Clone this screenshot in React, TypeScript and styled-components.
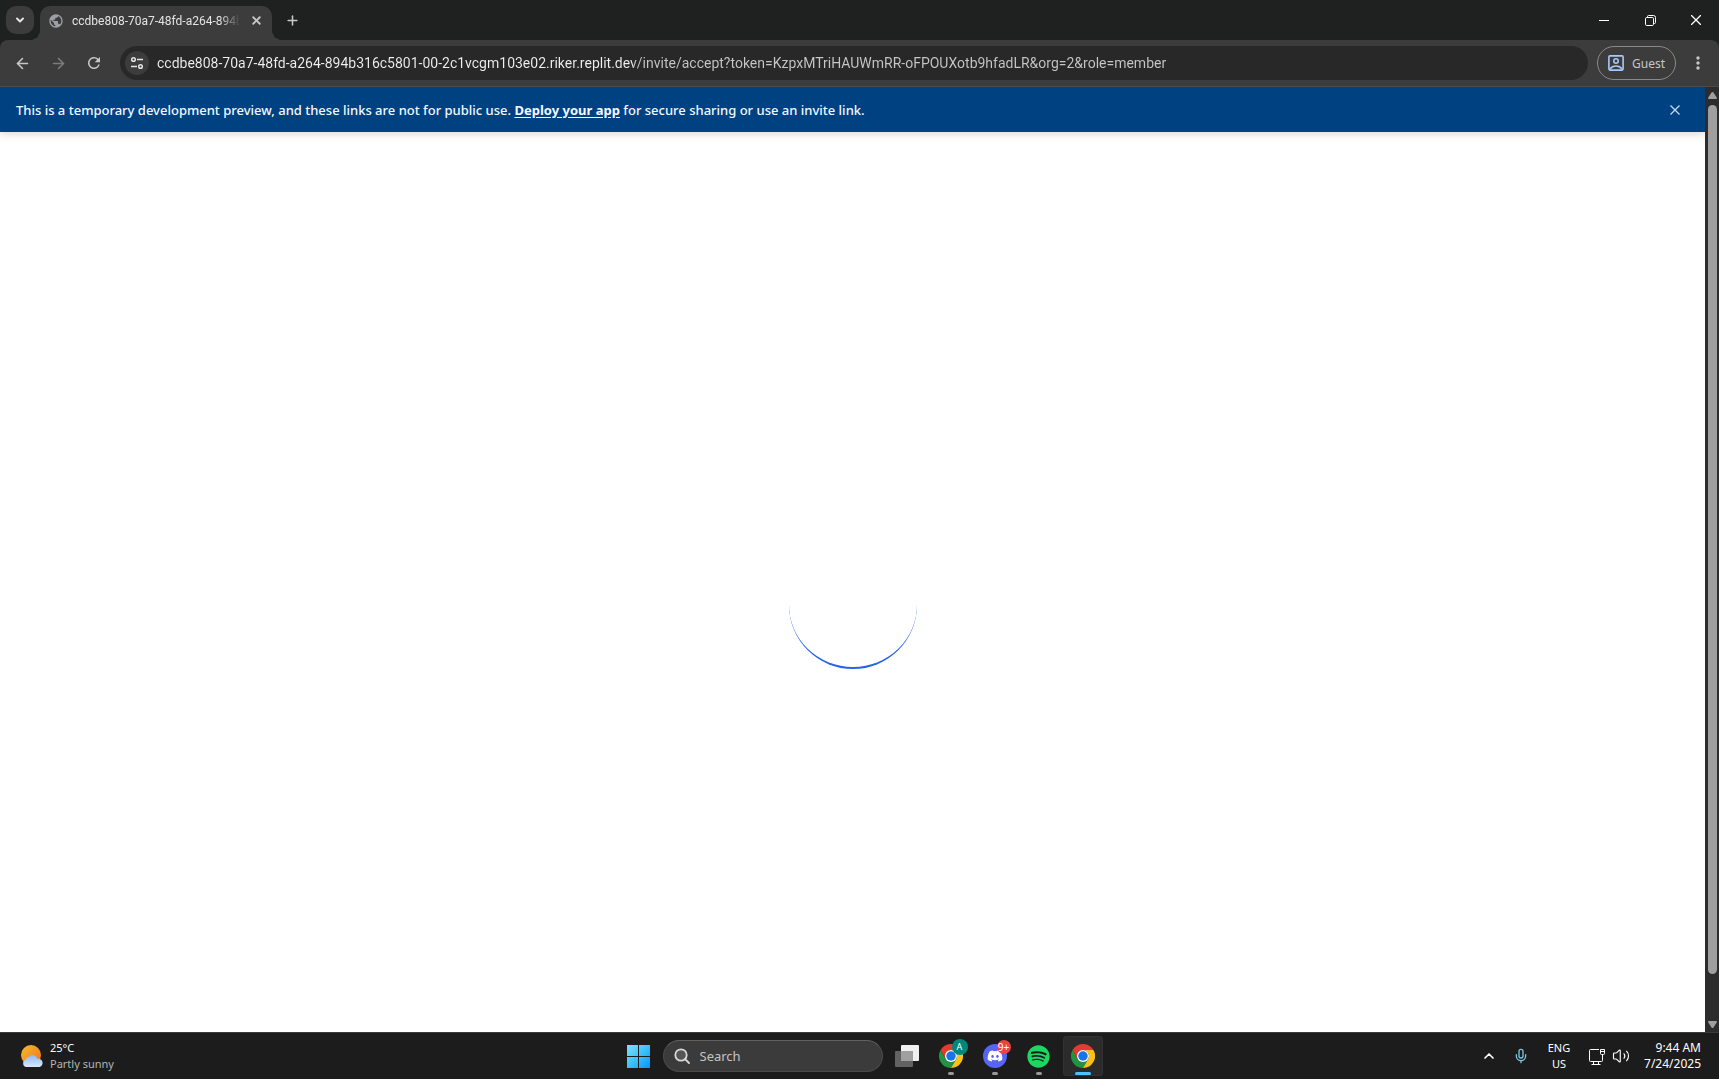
import React from "react";
import styled, { createGlobalStyle } from "styled-components";
import { ArrowLeft, ArrowRight, ChevronDown, ChevronUp, Mic, Plus, Volume2, X } from "lucide-react";
import { MdPublic, MdRefresh, MdMoreVert } from "react-icons/md";
import { FaSpotify, FaDiscord } from "react-icons/fa";

const GlobalStyle = createGlobalStyle`
  *, *::before, *::after { box-sizing: border-box; }
  html, body, #root { height: 100%; }
  body { margin: 0; overflow: hidden; font-family: "Noto Sans", "Open Sans", sans-serif; font-size: 13px; }
  button, input { font: inherit; color: inherit; border: 0; padding: 0; margin: 0; background: none; }
  svg { display: block; flex: none; }
`;

const Desktop = styled.div`
  display: flex;
  flex-direction: column;
  height: 100vh;
  background: #1f2120;
`;

const TabStrip = styled.header`
  display: flex;
  flex: none;
  height: 40px;
  padding-left: 6px;
  color: #e3e3e3;
`;

const TabSearch = styled.button`
  display: grid;
  place-items: center;
  width: 28px;
  height: 28px;
  margin: 6px 6px 0 0;
  border-radius: 10px;
  background: #3c3c3c;
`;

const Tab = styled.div`
  position: relative;
  display: flex;
  align-items: center;
  width: 232px;
  height: 34px;
  margin-top: 6px;
  padding: 0 8px 5px;
  border-radius: 10px 10px 0 0;
  background: #3c3c3c;
  font-family: Roboto, "Noto Sans", sans-serif;
  font-size: 12px;
  line-height: 16px;

  &::before, &::after {
    content: "";
    position: absolute;
    bottom: 0;
    width: 10px;
    height: 10px;
  }
  &::before {
    right: 100%;
    background: radial-gradient(circle at 0 0, transparent 10px, #3c3c3c 10px);
  }
  &::after {
    left: 100%;
    background: radial-gradient(circle at 100% 0, transparent 10px, #3c3c3c 10px);
  }
`;

const TabTitle = styled.span`
  flex: 1;
  min-width: 0;
  margin: 0 8px;
  overflow: hidden;
  white-space: nowrap;
  mask-image: linear-gradient(90deg, #000 88%, transparent);
`;

const IconButton = styled.button<{ $size?: number; $dim?: boolean }>`
  display: grid;
  place-items: center;
  flex: none;
  width: ${(p) => p.$size ?? 28}px;
  height: ${(p) => p.$size ?? 28}px;
  border-radius: 50%;
  color: ${(p) => (p.$dim ? "#7b7b7b" : "#c7c7c7")};
`;

const NewTab = styled(IconButton)`
  margin: 6px 0 0 6px;
`;

const WindowControls = styled.div`
  display: flex;
  margin-left: auto;
  color: #fff;
`;

const WindowButton = styled.button`
  display: grid;
  place-items: center;
  width: 46px;
  height: 40px;
`;

const Toolbar = styled.nav`
  display: flex;
  align-items: center;
  flex: none;
  height: 47px;
  padding: 0 7px 0 8px;
  border-bottom: 1px solid #4a4a4a;
  border-radius: 8px 8px 0 0;
  background: #3c3c3c;
`;

const NavButtons = styled.div`
  display: flex;
  gap: 8px;
  margin-right: 12px;
`;

const Omnibox = styled.label`
  display: flex;
  align-items: center;
  flex: 1;
  min-width: 0;
  height: 34px;
  padding: 0 5px;
  border-radius: 17px;
  background: #282828;
`;

const SiteInfo = styled.button`
  display: grid;
  place-items: center;
  flex: none;
  width: 24px;
  height: 24px;
  margin-right: 8px;
  border-radius: 50%;
  background: #3c3c3c;
  color: #e3e3e3;
`;

const UrlInput = styled.input`
  flex: 1;
  min-width: 0;
  height: 24px;
  outline: 0;
  font-family: Roboto, "Noto Sans", sans-serif;
  font-size: 14px;
  line-height: 24px;
  color: #c7c7c7;
  background: linear-gradient(90deg, #f1f1f1 476px, #c7c7c7 476px);
  background-clip: text;
  -webkit-text-fill-color: transparent;
`;

const GuestButton = styled.button`
  display: flex;
  align-items: center;
  gap: 8px;
  height: 34px;
  margin: 0 8px 0 9px;
  padding: 0 10px;
  border: 1px solid #8a8a8a;
  border-radius: 17px;
  color: #c7c7c7;
  font-size: 12px;
`;

const Viewport = styled.div`
  display: flex;
  flex: 1;
  min-height: 0;
  background: #fff;
`;

const Page = styled.div`
  display: flex;
  flex-direction: column;
  flex: 1;
  min-width: 0;
  overflow: hidden;
`;

const Banner = styled.div`
  display: flex;
  align-items: center;
  justify-content: space-between;
  flex: none;
  height: 45px;
  padding: 0 16px;
  background: #004182;
  box-shadow: 0 2px 8px rgba(0, 0, 0, 0.16);
  color: #f5f9fc;
  font-size: 13px;
  font-weight: 500;

  p { margin: 0; }
  a { color: inherit; font-weight: 700; text-underline-offset: 2px; }
`;

const Loading = styled.main`
  display: grid;
  place-items: center;
  flex: 0 0 100%;
`;

const Spinner = styled.div`
  width: 128px;
  height: 128px;
  border-bottom: 2px solid #2563eb;
  border-radius: 50%;
`;

const Scrollbar = styled.div`
  display: flex;
  flex-direction: column;
  align-items: center;
  justify-content: space-between;
  flex: none;
  width: 14px;
  padding: 5px 0 4px;
  background: #2c2c2c;
  color: #9f9f9f;
`;

const Track = styled.div`
  flex: 1;
  width: 9px;
  margin: 6px 0 6px;
`;

const Thumb = styled.div`
  height: calc(100% * 944 / 989);
  border-radius: 5px;
  background: #9f9f9f;
`;

const Taskbar = styled.footer`
  display: grid;
  grid-template-columns: 1fr auto 1fr;
  align-items: center;
  flex: none;
  height: 47px;
  border-top: 1px solid #3a3a3a;
  background: #1c1c1c;
  color: #fff;
  font-size: 11px;
  line-height: 16px;
`;

const Weather = styled.button`
  display: flex;
  align-items: center;
  gap: 6px;
  justify-self: start;
  margin-left: 20px;
  text-align: left;
`;

const Stack = styled.span<{ $align?: string }>`
  display: flex;
  flex-direction: column;
  text-align: ${(p) => p.$align ?? "left"};
`;

const Muted = styled.span`
  color: #b5b5b5;
`;

const Apps = styled.div`
  display: flex;
  align-items: center;
  gap: 2px;
  padding-left: 2px;
`;

const AppGroup = styled.div`
  display: flex;
`;

const AppSlot = styled.button<{ $active?: boolean }>`
  position: relative;
  display: grid;
  place-items: center;
  width: 40px;
  height: 40px;
  margin: 0 2px;
  border-radius: 4px;
  background: ${(p) => (p.$active ? "#2b2b2b" : "none")};
  box-shadow: ${(p) => (p.$active ? "inset 0 0 0 1px #323232" : "none")};
`;

const Running = styled.span<{ $active?: boolean }>`
  position: absolute;
  bottom: 1px;
  left: 50%;
  width: ${(p) => (p.$active ? 16 : 6)}px;
  height: 3px;
  border-radius: 2px;
  background: ${(p) => (p.$active ? "#4cc2ff" : "#9a9a9a")};
  transform: translateX(-50%);
`;

const Badge = styled.span<{ $color: string; $small?: boolean }>`
  position: absolute;
  top: ${(p) => (p.$small ? 4 : 3)}px;
  right: ${(p) => (p.$small ? 4 : 3)}px;
  width: ${(p) => (p.$small ? 14 : 16)}px;
  height: ${(p) => (p.$small ? 14 : 16)}px;
  border-radius: 50%;
  background: ${(p) => p.$color};
  font-size: ${(p) => (p.$small ? 10 : 9)}px;
  line-height: ${(p) => (p.$small ? 14 : 16)}px;
  text-align: center;
`;

const SearchBox = styled.label`
  display: flex;
  align-items: center;
  gap: 10px;
  width: 220px;
  height: 32px;
  padding: 0 10px;
  border: 1px solid #4a4a4a;
  border-top-color: #606060;
  border-radius: 16px;
  background: #3b3b3b;

  input {
    width: 100%;
    min-width: 0;
    outline: 0;
    font-size: 13px;
  }
  input::placeholder { color: #c4c4c4; opacity: 1; }
`;

const Tray = styled.div`
  display: flex;
  align-items: center;
  justify-self: end;
  padding-right: 18px;
`;

const TrayButton = styled.button<{ $w: number }>`
  display: flex;
  align-items: center;
  justify-content: center;
  gap: 7px;
  width: ${(p) => p.$w}px;
  height: 40px;
`;

const Clock = styled.button`
  width: 64px;
  font-size: 12px;
`;

function ChromeLogo() {
  return (
    <svg width="24" height="24" viewBox="0 0 48 48" aria-hidden="true">
      <path d="M3.2 12A24 24 0 0 0 24 48L34.4 30 24 24 13.6 30Z" fill="#229342" />
      <path d="M44.8 12A24 24 0 0 1 24 48L34.4 30A12 12 0 0 0 24 12Z" fill="#fbc116" />
      <path d="M3.2 12 13.6 30 24 24 24 12 44.8 12A24 24 0 0 0 3.2 12Z" fill="#e33b2e" />
      <circle cx="24" cy="24" r="12" fill="#fff" />
      <circle cx="24" cy="24" r="9.5" fill="#1a73e8" />
    </svg>
  );
}

function SiteInfoIcon() {
  return (
    <svg width="14" height="14" viewBox="0 0 14 14" fill="none" stroke="currentColor" strokeWidth="1.5" aria-hidden="true">
      <circle cx="3.5" cy="3.5" r="1.8" />
      <path d="M7 3.5h6M1 10.5h6" />
      <circle cx="10.5" cy="10.5" r="1.8" />
    </svg>
  );
}

function GuestIcon() {
  return (
    <svg width="16" height="16" viewBox="0 0 16 16" fill="none" stroke="#a8c7fa" strokeWidth="1.6" aria-hidden="true">
      <rect x=".9" y=".9" width="14.2" height="14.2" rx="1" />
      <circle cx="8" cy="6" r="2.2" />
      <path d="M2 14c1.5-2 3.5-3 6-3s4.5 1 6 3" />
    </svg>
  );
}

function RestoreIcon() {
  return (
    <svg width="11" height="11" viewBox="0 0 11 11" fill="none" stroke="currentColor" aria-hidden="true">
      <rect x=".5" y="2.5" width="8" height="8" rx="1.2" />
      <path d="M2.5 2V1.5a1 1 0 0 1 1-1h5a2 2 0 0 1 2 2v5a1 1 0 0 1-1 1H9" />
    </svg>
  );
}

function WeatherIcon() {
  return (
    <svg width="24" height="24" viewBox="0 0 24 24" aria-hidden="true">
      <defs>
        <linearGradient id="sun" x1="0" y1="0" x2="1" y2="1">
          <stop offset="0" stopColor="#f7bd2c" />
          <stop offset="1" stopColor="#f0701a" />
        </linearGradient>
        <linearGradient id="cloud" x1="0" y1="0" x2="0" y2="1">
          <stop offset="0" stopColor="#8fb8f4" />
          <stop offset="1" stopColor="#dbe8fd" />
        </linearGradient>
      </defs>
      <circle cx="11" cy="11" r="10" fill="url(#sun)" />
      <path d="M6.5 23a3.8 3.8 0 0 1-.3-7.500 3 3 0 0 1 3-2.700 4.500 4.500 0 0 1 8 2A4.200 4.200 0 0 1 19.500 23Z" fill="url(#cloud)" />
    </svg>
  );
}

function StartIcon() {
  return (
    <svg width="23" height="23" viewBox="0 0 23 23" aria-hidden="true">
      <defs>
        <linearGradient id="start" gradientUnits="userSpaceOnUse" x1="0" y1="0" x2="23" y2="23">
          <stop offset="0" stopColor="#7fe0ff" />
          <stop offset=".5" stopColor="#3bc2fb" />
          <stop offset="1" stopColor="#0a91f7" />
        </linearGradient>
      </defs>
      <path d="M0 0h11v11H0zM12 0h11v11H12zM0 12h11v11H0zM12 12h11v11H12z" fill="url(#start)" />
    </svg>
  );
}

function SearchIcon() {
  return (
    <svg width="16" height="16" viewBox="0 0 16 16" fill="none" stroke="#d8d8d8" strokeWidth="1.8" aria-hidden="true">
      <circle cx="7" cy="7" r="5.7" fill="#555" />
      <path d="m11 11 4 4" strokeLinecap="round" />
    </svg>
  );
}

function TaskViewIcon() {
  return (
    <svg width="24" height="22" viewBox="0 0 24 22" aria-hidden="true">
      <rect x="6" width="18" height="16" rx="1" fill="#f0f0f0" />
      <rect y="6" width="18" height="16" rx="1" fill="#626262" />
      <path d="M6 6h12v10H6z" fill="#a0a0a0" />
    </svg>
  );
}

function NetworkIcon() {
  return (
    <svg width="17" height="17" viewBox="0 0 17 17" fill="none" stroke="currentColor" aria-hidden="true">
      <path d="M11 1.500H2.500a1 1 0 0 0-1 1v10a1 1 0 0 0 1 1H13.500a1 1 0 0 0 1-1V7M5.500 13.500v3M10.500 13.500v3M3.500 16.500h9" />
      <path d="M12.500 1.500h4v4a1 1 0 0 1-1 1h-2a1 1 0 0 1-1-1zM12.500 3.500h4" />
    </svg>
  );
}

const Arrow = ({ down }: { down?: boolean }) => (
  <svg width="9" height="7" viewBox="0 0 9 7" fill="currentColor" aria-hidden="true">
    <path d={down ? "M0 1Q0 0 1 0H8Q9 0 9 1L5.500 6.500Q4.500 7.500 3.500 6.500Z" : "M0 6Q0 7 1 7H8Q9 7 9 6L5.500.5Q4.500-.5 3.500.5Z"} />
  </svg>
);

export default function App() {
  return (
    <>
      <GlobalStyle />
      <Desktop>
        <TabStrip>
          <TabSearch aria-label="Search tabs"><ChevronDown size={12} strokeWidth={4} /></TabSearch>
          <Tab>
            <MdPublic size={16} color="#9aa0a6" />
            <TabTitle>ccdbe808-70a7-48fd-a264-894b</TabTitle>
            <IconButton $size={16} aria-label="Close tab"><X size={13} strokeWidth={3.5} /></IconButton>
          </Tab>
          <NewTab aria-label="New tab"><Plus size={15} strokeWidth={2.5} /></NewTab>
          <WindowControls>
            <WindowButton aria-label="Minimize">
              <svg width="10" height="1" aria-hidden="true"><path d="M0 .5h10" stroke="currentColor" /></svg>
            </WindowButton>
            <WindowButton aria-label="Restore"><RestoreIcon /></WindowButton>
            <WindowButton aria-label="Close">
              <svg width="10" height="10" aria-hidden="true"><path d="m0 0 10 10M10 0 0 10" stroke="currentColor" strokeWidth="1.3" /></svg>
            </WindowButton>
          </WindowControls>
        </TabStrip>

        <Toolbar>
          <NavButtons>
            <IconButton aria-label="Back"><ArrowLeft size={17} strokeWidth={2.3} /></IconButton>
            <IconButton aria-label="Forward" $dim><ArrowRight size={17} strokeWidth={2.3} /></IconButton>
            <IconButton aria-label="Reload"><MdRefresh size={18} /></IconButton>
          </NavButtons>
          <Omnibox>
            <SiteInfo aria-label="View site information"><SiteInfoIcon /></SiteInfo>
            <UrlInput
              aria-label="Address"
              spellCheck={false}
              defaultValue="ccdbe808-70a7-48fd-a264-894b316c5801-00-2c1vcgm103e02.riker.replit.dev/invite/accept?token=KzpxMTriHAUWmRR-oFPOUXotb9hfadLR&org=2&role=member"
            />
          </Omnibox>
          <GuestButton><GuestIcon />Guest</GuestButton>
          <IconButton aria-label="Menu"><MdMoreVert size={20} /></IconButton>
        </Toolbar>

        <Viewport>
          <Page>
            <Banner>
              <p>
                This is a temporary development preview, and these links are not for public use.{" "}
                <a href="#deploy">Deploy your app</a> for secure sharing or use an invite link.
              </p>
              <IconButton aria-label="Dismiss">
                <svg width="10" height="10" aria-hidden="true"><path d="m.5.5 9 9M9.500.5l-9 9" stroke="#c5dbee" strokeWidth="1.3" /></svg>
              </IconButton>
            </Banner>
            <Loading><Spinner role="status" aria-label="Loading" /></Loading>
          </Page>
          <Scrollbar>
            <Arrow />
            <Track><Thumb /></Track>
            <Arrow down />
          </Scrollbar>
        </Viewport>

        <Taskbar>
          <Weather>
            <WeatherIcon />
            <Stack><span>25°C</span><Muted>Partly sunny</Muted></Stack>
          </Weather>
          <Apps>
            <AppSlot aria-label="Start"><StartIcon /></AppSlot>
            <SearchBox>
              <SearchIcon />
              <input type="text" placeholder="Search" aria-label="Search" />
            </SearchBox>
            <AppGroup>
              <AppSlot aria-label="Task view"><TaskViewIcon /></AppSlot>
              <AppSlot aria-label="Chrome, profile A"><ChromeLogo /><Badge $color="#00897b">A</Badge><Running /></AppSlot>
              <AppSlot aria-label="Discord">
                <svg width="24" height="24" aria-hidden="true">
                  <circle cx="12" cy="12" r="12" fill="#5865f2" />
                  <FaDiscord x="4" y="4" size={16} color="#fff" />
                </svg>
                <Badge $color="#ed4245" $small>9+</Badge><Running />
              </AppSlot>
              <AppSlot aria-label="Spotify"><FaSpotify size={23} color="#1ed760" /><Running /></AppSlot>
              <AppSlot aria-label="Chrome" $active><ChromeLogo /><Running $active /></AppSlot>
            </AppGroup>
          </Apps>
          <Tray>
            <TrayButton $w={32} aria-label="Show hidden icons"><ChevronUp size={16} strokeWidth={2.5} /></TrayButton>
            <TrayButton $w={32} aria-label="Microphone"><Mic size={16} color="#7cc4e0" /></TrayButton>
            <TrayButton $w={44}><Stack $align="center"><span>ENG</span><span>US</span></Stack></TrayButton>
            <TrayButton $w={56} aria-label="Network and volume"><NetworkIcon /><Volume2 size={18} strokeWidth={1.5} /></TrayButton>
            <Clock><Stack $align="right"><span>9:44 AM</span><span>7/24/2025</span></Stack></Clock>
          </Tray>
        </Taskbar>
      </Desktop>
    </>
  );
}
